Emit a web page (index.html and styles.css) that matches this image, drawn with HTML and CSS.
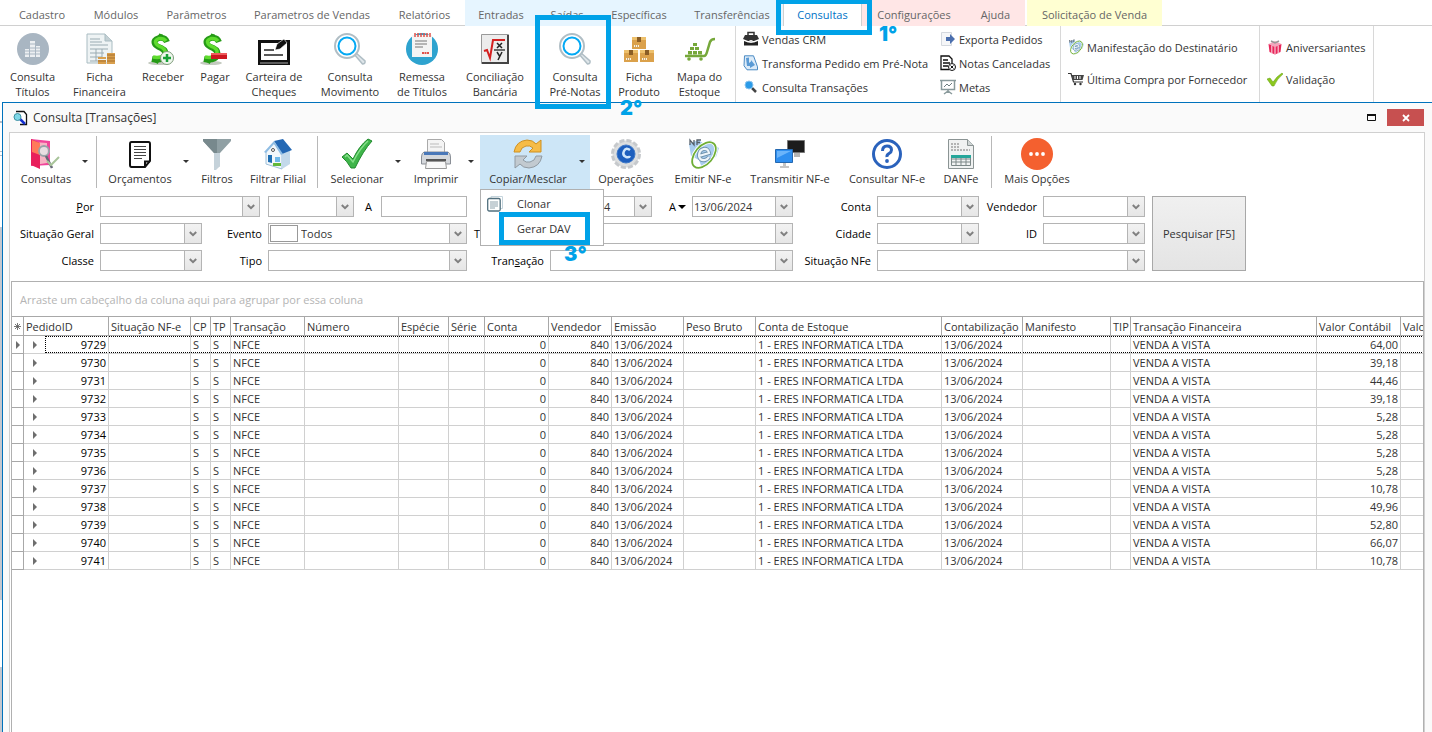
FILE: index.html
```html
<!DOCTYPE html>
<html lang="pt-BR">
<head>
<meta charset="utf-8">
<title>Consulta [Transações]</title>
<link rel="stylesheet" href="styles.css">
</head>
<body>
<svg class="defs" aria-hidden="true">
  <symbol id="chev" viewBox="0 0 8 6"><path d="M.8 1L4 4.200 7.200 1" fill="none" stroke="#808080" stroke-width="2"/></symbol>
  <symbol id="caret" viewBox="0 0 6 3"><path d="M0 0h6L3 3z" fill="#333"/></symbol>
  <symbol id="exp" viewBox="0 0 4 8"><path d="M0 0l4 4-4 4z" fill="#6e6e6e"/></symbol>
  <symbol id="lens" viewBox="0 0 32 32"><path d="M20 21l1.500-1.500L31 28q.5 3-2.500 3z" fill="#dfe6ea" stroke="#b0bec5" stroke-width="1.500"/><circle cx="13" cy="13" r="12" fill="#fff" stroke="#b0bec5" stroke-width="2"/><circle cx="13" cy="13" r="8.500" fill="#fff" stroke="#03a9f4" stroke-width="2"/></symbol>
  <symbol id="nfe" viewBox="0 0 32 32"><path d="M2 6l9-4 5 3 8-3 3 5 5 3-3 9-6 2-3 8-5 1-3-8-8-4z" fill="#a9cdf0"/><path d="M3 7V2l4 5V2M10 7V2h4M10 4.500h3" fill="none" stroke="#55606a" stroke-width="1.300"/><ellipse cx="17" cy="17" rx="15" ry="9" transform="rotate(-50 17 17)" fill="none" stroke="#fff" stroke-width="3.500"/><ellipse cx="17" cy="17" rx="15" ry="9" transform="rotate(-50 17 17)" fill="none" stroke="#6fae36" stroke-width="1.800"/><path d="M12 18l10-3q-1-5-5.500-4T12 18q1 5 6 4 3-1 4-3" fill="none" stroke="#6f93ad" stroke-width="4"/><path d="M12 18l10-3q-1-5-5.500-4T12 18q1 5 6 4 3-1 4-3" fill="none" stroke="#eef5fa" stroke-width="2.200"/></symbol>
  <symbol id="dollar" viewBox="0 0 32 32"><ellipse cx="12" cy="30" rx="11" ry="2" fill="#c3cabf"/><path d="M20 9q-2-5-8-4-6 2-4 6 1 2 6 4 6 3 4 8-3 5-13 3" fill="none" stroke="#259a16" stroke-width="6"/><path d="M14 1l-1 4M11 26l-2 4" fill="none" stroke="#259a16" stroke-width="4"/><path d="M19 8q-2-3-7-2.500-5 2-3 5 1 2 6 4 5 3 2 7-3 4-11 2.500" fill="none" stroke="#5fdc2e" stroke-width="3.500"/></symbol>
  <symbol id="box" viewBox="0 0 14 12"><path d="M0 0h14v12H0z" fill="#dba14b"/><path d="M0 0h14v3H0z" fill="#edc06c"/><path d="M5 0h4v5H5z" fill="#8a5d25"/><path d="M2 8h5v2H2z" fill="#fff3d8"/><path d="M3 9h1M5 9h1" stroke="#8a5d25"/></symbol>
</svg>

<nav class="tabs">
  <button>Cadastro</button><button>Módulos</button><button>Parâmetros</button><button>Parametros de Vendas</button><button>Relatórios</button><button class="blue">Entradas</button><button class="blue">Saídas</button><button class="blue">Específicas</button><button class="blue">Transferências</button><button class="active">Consultas</button><button class="pink">Configurações</button><button class="pink">Ajuda</button><button class="yellow">Solicitação de Venda</button>
</nav>

<section class="ribbon">
  <div class="big">
    <button><svg viewBox="0 0 32 32"><circle cx="16" cy="16" r="16" fill="#a9b6c2"/><path d="M8 16h4v8H8zM13 8h5v16h-5zM19 13h4v11h-4z" fill="#eceff2"/><path d="M7 11h17M7 15h17M7 18h17M7 21h17" stroke="#a9b6c2"/></svg><span>Consulta<br>Títulos</span></button>
    <button><svg viewBox="0 0 32 32"><path d="M3 1h18l7 7v22H3z" fill="#eef3f4" stroke="#a9bcc2"/><path d="M21 1v7h7" fill="#c3d0d4" stroke="#a9bcc2"/><path d="M6 6h10M6 9h12M6 12h18M6 16h18M6 20h14M6 24h12M6 28h10M12 16v12M18 16v8" stroke="#9aabb2"/><path d="M14 27h8v4h-8zM14 24h8v2h-8zM23 20h8v11h-8z" fill="#d9a04e"/><path d="M14 28h8M23 22h8M23 25h8M23 28h8" stroke="#a8702c"/></svg><span>Ficha<br>Financeira</span></button>
    <button><svg viewBox="0 0 32 32"><use href="#dollar"/><circle cx="20" cy="25" r="6.500" fill="#eef7ec" stroke="#7d9a7a"/><path d="M20 21v8M16 25h8" stroke="#18a038" stroke-width="2.500"/></svg><span>Receber</span></button>
    <button><svg viewBox="0 0 32 32"><use href="#dollar"/><path d="M12 20h16v6H12z" fill="#cc1820"/><path d="M12 20h16v2H12z" fill="#ee5a5c"/></svg><span>Pagar</span></button>
    <button><svg viewBox="0 0 32 32"><path d="M1.500 8.500h29v20h-29z" fill="#fff" stroke="#111" stroke-width="3"/><path d="M0 27h32v5H0z" fill="#111"/><path d="M2 30h28" stroke="#aaa"/><path d="M6 17h10M6 22h19" stroke="#222" stroke-width="1.500"/><path d="M17 17l2-6 7-5 3 4-7 6z" fill="#111" stroke="#fff" stroke-width=".6"/></svg><span>Carteira de<br>Cheques</span></button>
    <button><svg viewBox="0 0 32 32"><use href="#lens"/></svg><span>Consulta<br>Movimento</span></button>
    <button><svg viewBox="0 0 32 32"><circle cx="16" cy="16" r="16" fill="#2ea3cf"/><path d="M6 2h20v22H6z" fill="#f4f4f4"/><path d="M9 0v4M12 0v4M15 0v4M18 0v4M21 0v4M24 0v4" stroke="#e0524a" stroke-width="1.500"/><path d="M9 8h12M9 11h12M9 14h8" stroke="#777"/><path d="M16 20h7" stroke="#e0524a" stroke-width="2" stroke-dasharray="2 .5"/></svg><span>Remessa<br>de Títulos</span></button>
    <button><svg viewBox="0 0 32 32"><path d="M2.500 1.500h27v29h-27z" fill="#ececec" stroke="#999"/><path d="M29 2v28H3" fill="none" stroke="#444" stroke-width="2"/><path d="M5 18l3-1 3 8 3-18h12" fill="none" stroke="#d42020" stroke-width="2"/><path d="M15 17h11" stroke="#222" stroke-width="1.300"/><path d="M18 10l5 5M23 10l-5 5M18 19l2.500 4M23 19l-4 8" fill="none" stroke="#222" stroke-width="1.500"/></svg><span>Conciliação<br>Bancária</span></button>
    <button><svg viewBox="0 0 32 32"><use href="#lens"/></svg><span>Consulta<br>Pré-Notas</span></button>
    <button><svg viewBox="0 0 32 32"><use href="#box" x="9" y="4" width="14" height="12"/><use href="#box" x="1" y="17" width="14" height="12"/><use href="#box" x="17" y="17" width="14" height="12"/></svg><span>Ficha<br>Produto</span></button>
    <button><svg viewBox="0 0 32 32"><path d="M1 23h19q2 0 3-4l3-10q1-3 5-3" fill="none" stroke="#76a83a" stroke-width="2.500"/><path d="M4 18h4v3.500H4zM9 18h4v3.500H9zM14 18h4v3.500h-4zM6 14h4v3H6zM11 14h4v3h-4zM9 10h4v3H9z" fill="#76a83a"/><circle cx="5" cy="26" r="1.800" fill="#76a83a"/><circle cx="17" cy="26" r="1.800" fill="#76a83a"/></svg><span>Mapa do<br>Estoque</span></button>
  </div>
  <div class="group three">
    <button><svg viewBox="0 0 16 16"><path d="M5 4V1.500h6V4" fill="none" stroke="#333" stroke-width="1.500"/><path d="M2 4h12l2 4-5 2H5L0 8z" fill="#333"/><path d="M1 10l4 1.500h6L15 10v4.500H1z" fill="#222"/><path d="M6.500 9h3v3h-3z" fill="#ddd"/></svg>Vendas CRM</button>
    <button><svg viewBox="0 0 16 16"><path d="M1.500.8h9l4 11v3H4l-3-4z" fill="#dcebf8" stroke="#4a8ac4"/><path d="M3 3l3-.5V8l2-1.500V5l4 5-5 3v-2H4z" fill="#5b9bd5"/></svg>Transforma Pedido em Pré-Nota</button>
    <button><svg viewBox="0 0 16 16"><path d="M9 9l4 4" stroke="#444" stroke-width="2.500"/><circle cx="6" cy="6" r="4" fill="#2b9be8" stroke="#8cc4ee"/></svg>Consulta Transações</button>
  </div>
  <div class="group three">
    <button><svg viewBox="0 0 16 16"><path d="M1.500 1.500h10v13h-10z" fill="#f5f6f8" stroke="#d4d8de"/><path d="M6 6h4V3l5 5-5 5v-3H6z" fill="#4b6fae"/></svg>Exporta Pedidos</button>
    <button><svg viewBox="0 0 16 16"><path d="M9.500 14.500H1V1h8l3 3v4" fill="#fff" stroke="#111" stroke-width="1.300"/><path d="M3 5h5M3 8h7M3 11h5" stroke="#111" stroke-width="1.300"/><circle cx="12" cy="12" r="3.500" fill="#fff" stroke="#111"/><path d="M10.500 10.500l3 3M13.500 10.500l-3 3" stroke="#111"/></svg>Notas Canceladas</button>
    <button><svg viewBox="0 0 16 16"><path d="M0 1.500h16M1.500 2v8.500h13V2M8 11v3M8 12l-4 3M8 12l4 3" fill="none" stroke="#8a9a9c" stroke-width="1.500"/><path d="M4 8l3-3 2 2 3-3" fill="none" stroke="#6d7d80"/></svg>Metas</button>
  </div>
  <div class="group two wide">
    <button><svg viewBox="0 0 32 32"><use href="#nfe"/></svg>Manifestação do Destinatário</button>
    <button><svg viewBox="0 0 16 16"><path d="M0 2.500h3l2.500 8.500H15" fill="none" stroke="#333" stroke-width="1.200"/><path d="M3.500 4H16l-1.500 5h-9.500z" fill="#444"/><path d="M7 5v3M9.500 5v3M12 5v3" stroke="#fff"/><circle cx="7" cy="13" r="1.200" fill="#333"/><circle cx="12.500" cy="13" r="1.200" fill="#333"/></svg>Última Compra por Fornecedor</button>
  </div>
  <div class="group two last">
    <button><svg viewBox="0 0 16 16"><path d="M1.500 5l6.500-3 6.500 3L8 8z" fill="#f3a6bd"/><path d="M1.500 5L8 8l6.500-3-1 8L8 15.500 2.500 13z" fill="#e8265a"/><path d="M4.800 6.500v8M11.200 6.500v8M8 8v7.500" stroke="#f9c6d4" stroke-width="1.200"/><path d="M4 2l4 2 4-2" fill="none" stroke="#999" stroke-width="1.500"/></svg>Aniversariantes</button>
    <button><svg viewBox="0 0 16 16"><path d="M0 8l3-1 3 4q4-6 9-9l1 1q-6 5-9 12H5z" fill="#8cc81e" stroke="#5f9a10" stroke-width=".5"/></svg>Validação</button>
  </div>
</section>

<main class="desk">
<section class="window">
  <header class="title">
    <svg viewBox="0 0 16 16" class="i16"><path d="M3 1.500h8l2.500 3v10H7" fill="#fff" stroke="#111" stroke-width="1.300"/><path d="M7 9l5 5" stroke="#1530d0" stroke-width="2.500"/><circle cx="4.500" cy="7" r="3.500" fill="#7fd8e8" stroke="#3a8fa0"/></svg>
    <h1>Consulta [Transações]</h1>
    <button class="max" aria-label="Maximizar"><svg viewBox="0 0 9 7"><path d="M.5 1.500h8v5h-8z" fill="none" stroke="#111"/><path d="M0 1h9" stroke="#111" stroke-width="2"/></svg></button>
    <button class="close" aria-label="Fechar"><svg viewBox="0 0 8 8"><path d="M1 1l6 6M7 1L1 7" stroke="#fff" stroke-width="1.800"/></svg></button>
  </header>

  <div class="panel">
    <div class="tools">
      <button><svg viewBox="0 0 32 32"><path d="M1 1l19 2v24L1 28z" fill="#f0459a"/><path d="M4 4l13 1v20L4 27z" fill="#f7b4c4"/><path d="M1 1l9 4v26l-9-4z" fill="#e8205c"/><path d="M2 2l8 3v12L2 14z" fill="#ff7a5a"/><circle cx="14" cy="13" r="5" fill="#e4e8ea" fill-opacity=".8" stroke="#98a3a8" stroke-width="1.800"/><path d="M16 18l6 12" stroke="#667" stroke-width="2.500"/><path d="M17 23l4 4 8-8" fill="none" stroke="#a8c49a" stroke-width="2"/></svg>Consultas</button>
      <button class="more" aria-label="Mais consultas"><svg><use href="#caret"/></svg></button>
      <i class="sep"></i>
      <button><svg viewBox="0 0 32 32"><path d="M7.500 4h17q1.500 0 1.500 2v17l-5 6H7.500Q6 29 6 27V6q0-2 1.500-2z" fill="#fff" stroke="#111" stroke-width="2"/><path d="M26 23.500h-5V29" fill="none" stroke="#111" stroke-width="2"/><path d="M10 8.500h12M10 11.500h12M10 14.500h12M10 17.500h12M10 20.500h8" stroke="#444"/></svg>Orçamentos</button>
      <button class="more" aria-label="Mais orçamentos"><svg><use href="#caret"/></svg></button>
      <button><svg viewBox="0 0 32 32"><path d="M2 1h28v2L19 15v13l-6 4V15L2 3z" fill="#90a0a4"/><path d="M2 1h14v14h-3L2 3z" fill="#78898d"/><path d="M13 15h6v13l-4 4h-2z" fill="#c5d2da"/></svg>Filtros</button>
      <button><svg viewBox="0 0 32 32"><path d="M4 13l8-8 8 10v16L4 26z" fill="#f2f7fb" stroke="#9fc0da"/><path d="M20 15l8-3v14l-8 5z" fill="#c3d9ea"/><path d="M12 3l9-2 9 11-10 4z" fill="#2468b4"/><path d="M12 3L2 14l2 1 8-9 7 11 2-1z" fill="#8fbde4"/><path d="M6 17h4v8l-4-1z" fill="#1f6fb4"/><path d="M13 19h5v5h-5z" fill="#6fb8e8"/><circle cx="11" cy="12" r="1.500" fill="#fff" stroke="#555"/><path d="M11 25h8v3h-8z" fill="#62b83a"/></svg>Filtrar Filial</button>
      <i class="sep"></i>
      <button><svg viewBox="0 0 32 32"><path d="M1 19l5-4 6 6Q18 8 27 1l4 2Q22 13 14 30h-4Q6 23 1 19z" fill="#3fb54a" stroke="#1f8a2c"/><path d="M4 19l2-2 6 7Q19 10 27 3" fill="none" stroke="#86e08a" stroke-width="1.500"/></svg>Selecionar</button>
      <button class="more" aria-label="Mais seleções"><svg><use href="#caret"/></svg></button>
      <button><svg viewBox="0 0 32 32"><path d="M7.500 1.500h14l3 3V15h-17z" fill="#f4f4f4" stroke="#aaa"/><path d="M10 6h9M10 9h12" stroke="#bbb"/><path d="M4 14h24q2.500 1 2.500 5v7h-29v-7q0-4 2.500-5z" fill="#d5d8dc" stroke="#8a8f96"/><path d="M4 14h24v3H4z" fill="#4a78b8"/><path d="M6.500 23.500h19l1 7h-21z" fill="#f8f8f8" stroke="#999"/><path d="M6 22h20" stroke="#555" stroke-width="2"/></svg>Imprimir</button>
      <button class="more" aria-label="Mais impressões"><svg><use href="#caret"/></svg></button>
      <div class="open">
        <button><svg viewBox="0 0 32 32"><path d="M2 14Q4 3 15 2q6 0 9 4l5-4v12H17l4-4q-3-3-7-2-5 1-6 6z" fill="#f6bc48" stroke="#cf9020"/><path d="M30 18q-2 11-13 12-6 0-9-4l-5 4V18h12l-4 4q3 3 7 2 5-1 6-6z" fill="#c2cad0" stroke="#909aa2"/></svg>Copiar/Mesclar</button>
        <button class="more" aria-label="Mais cópias"><svg><use href="#caret"/></svg></button>
        <div class="menu">
          <button><svg viewBox="0 0 16 16" class="i16"><path d="M4 3V.5h11.500v12H13" fill="none" stroke="#c4d4dc"/><rect x=".7" y="2.500" width="12.500" height="12.500" rx="1.500" fill="#fff" stroke="#52707e" stroke-width="1.300"/><path d="M3 6h8M3 8h8M3 10h8M3 12h5" stroke="#8ea2ac"/></svg><span>Clonar</span></button>
          <button><span>Gerar DAV</span></button>
        </div>
      </div>
      <button><svg viewBox="0 0 32 32"><circle cx="16" cy="16" r="13.500" fill="#dcdedf" stroke="#c6c9cc" stroke-width="3" stroke-dasharray="5 2.070"/><circle cx="16" cy="16" r="9" fill="#1d5fbe" stroke="#3f79c8"/><path d="M20 12q-4-3-6 1t2 6q3 1 4-1" fill="none" stroke="#cfe6fb" stroke-width="2.500"/></svg>Operações</button>
      <button><svg viewBox="0 0 32 32"><use href="#nfe"/></svg>Emitir NF-e</button>
      <button><svg viewBox="0 0 32 32"><path d="M13.500 2.500h17v12h-17z" fill="#1c1c1c" stroke="#777"/><path d="M20 15h6v4h-6z" fill="#b5b5b5"/><path d="M1.500 11.500h17v13h-17z" fill="#2f8ff0" stroke="#2468b0"/><path d="M3 13h14L3 20z" fill="#6bb4fa"/><path d="M9 25h3v3h3v2H6v-2h3z" fill="#c5c5c5"/></svg>Transmitir NF-e</button>
      <button><svg viewBox="0 0 32 32"><circle cx="16" cy="16" r="13.500" fill="#fff" stroke="#2a62bc" stroke-width="3"/><path d="M11.500 13q0-5 4.500-5t4.500 4q0 2-2.500 3.500T16 19" fill="none" stroke="#2a62bc" stroke-width="3"/><circle cx="16" cy="23" r="1.900" fill="#2a62bc"/></svg>Consultar NF-e</button>
      <button><svg viewBox="0 0 32 32"><path d="M3.500 1.500h19l6 6v23h-25z" fill="#f0f2f2" stroke="#8b9494"/><path d="M22.500 1.500v6h6" fill="#d0d6d6" stroke="#8b9494"/><path d="M6 6h9M6 9h9M6 12h19" stroke="#777" stroke-dasharray="2 1"/><path d="M6.500 17.500h19v10h-19zM6 21h20M6 24h20M11 17v10M16 17v10M21 17v10" fill="none" stroke="#7c8888"/><path d="M6 17h20v3H6z" fill="#26a69a"/></svg>DANFe</button>
      <i class="sep"></i>
      <button><svg viewBox="0 0 32 32"><circle cx="16" cy="16" r="16" fill="#f4602f"/><circle cx="10" cy="16" r="1.900" fill="#fff"/><circle cx="16" cy="16" r="1.900" fill="#fff"/><circle cx="22" cy="16" r="1.900" fill="#fff"/></svg>Mais Opções</button>
    </div>

    <form class="filters">
      <label for="por"><u>P</u>or</label>
      <div class="combo c2"><select id="por"><option></option></select><span><svg><use href="#chev"/></svg></span></div>
      <div class="combo d1"><select aria-label="Operador"><option></option></select><span><svg><use href="#chev"/></svg></span></div>
      <label for="ate" class="mid">A</label>
      <input id="ate" type="text">
      <div class="combo date1"><select aria-label="Data inicial"><option>13/06/2024</option></select><span><svg><use href="#chev"/></svg></span></div>
      <label for="fim" class="until">A<svg><path d="M0 0h8L4 4z"/></svg></label>
      <div class="combo date2"><select id="fim"><option>13/06/2024</option></select><span><svg><use href="#chev"/></svg></span></div>
      <label for="conta" class="l4">Conta</label>
      <div class="combo f4"><select id="conta"><option></option></select><span><svg><use href="#chev"/></svg></span></div>
      <label for="vend" class="l5">Vendedor</label>
      <div class="combo f5"><select id="vend"><option></option></select><span><svg><use href="#chev"/></svg></span></div>
      <button type="button" class="search">Pesquisar [F5]</button>

      <label for="sit" class="r2">Situação Geral</label>
      <div class="combo f1 r2"><select id="sit"><option></option></select><span><svg><use href="#chev"/></svg></span></div>
      <label for="evento" class="l2 r2">Evento</label>
      <div class="combo f2 r2 swatch"><i></i><select id="evento"><option>Todos</option></select><span><svg><use href="#chev"/></svg></span></div>
      <label for="t" class="l3 r2 start">T</label>
      <div class="combo f3 r2"><select id="t"><option></option></select><span><svg><use href="#chev"/></svg></span></div>
      <label for="cidade" class="l4 r2">Cidade</label>
      <div class="combo f4 r2"><select id="cidade"><option></option></select><span><svg><use href="#chev"/></svg></span></div>
      <label for="ident" class="l5 r2">ID</label>
      <div class="combo f5 r2"><select id="ident"><option></option></select><span><svg><use href="#chev"/></svg></span></div>

      <label for="classe" class="r3">Classe</label>
      <div class="combo f1 r3"><select id="classe"><option></option></select><span><svg><use href="#chev"/></svg></span></div>
      <label for="tipo" class="l2 r3">Tipo</label>
      <div class="combo f2 r3"><select id="tipo"><option></option></select><span><svg><use href="#chev"/></svg></span></div>
      <label for="trans" class="l3 r3">Tran<u>s</u>ação</label>
      <div class="combo f3 r3"><select id="trans"><option></option></select><span><svg><use href="#chev"/></svg></span></div>
      <label for="nfes" class="l4 r3">Situação NFe</label>
      <div class="combo f45 r3"><select id="nfes"><option></option></select><span><svg><use href="#chev"/></svg></span></div>
    </form>

    <div class="grid">
      <p class="drop">Arraste um cabeçalho da coluna aqui para agrupar por essa coluna</p>
      <table>
        <colgroup><col class="w12"><col class="w85"><col class="w82"><col class="w20"><col class="w20"><col class="w74"><col class="w94"><col class="w50"><col class="w36"><col class="w64"><col class="w63"><col class="w72"><col class="w72"><col class="w186"><col class="w81"><col class="w88"><col class="w20"><col class="w186"><col class="w84"><col class="w50"></colgroup>
        <thead><tr><th><svg viewBox="0 0 7 7"><path d="M3.500 0v7M0 3.500h7M1 1l5 5M6 1L1 6" stroke="#555" stroke-width=".8"/></svg></th><th>PedidoID</th><th>Situação NF-e</th><th>CP</th><th>TP</th><th>Transação</th><th>Número</th><th>Espécie</th><th>Série</th><th>Conta</th><th>Vendedor</th><th>Emissão</th><th>Peso Bruto</th><th>Conta de Estoque</th><th>Contabilização</th><th>Manifesto</th><th>TIP</th><th>Transação Financeira</th><th>Valor Contábil</th><th>Valor</th></tr></thead>
        <tbody>
          <tr class="focus"><td><svg><use href="#exp"/></svg></td><td><div><svg><use href="#exp"/></svg><span>9729</span></div></td><td></td><td>S</td><td>S</td><td>NFCE</td><td></td><td></td><td></td><td>0</td><td>840</td><td>13/06/2024</td><td></td><td>1 - ERES INFORMATICA LTDA</td><td>13/06/2024</td><td></td><td></td><td>VENDA A VISTA</td><td>64,00</td><td></td></tr>
          <tr><td></td><td><div><svg><use href="#exp"/></svg><span>9730</span></div></td><td></td><td>S</td><td>S</td><td>NFCE</td><td></td><td></td><td></td><td>0</td><td>840</td><td>13/06/2024</td><td></td><td>1 - ERES INFORMATICA LTDA</td><td>13/06/2024</td><td></td><td></td><td>VENDA A VISTA</td><td>39,18</td><td></td></tr>
          <tr><td></td><td><div><svg><use href="#exp"/></svg><span>9731</span></div></td><td></td><td>S</td><td>S</td><td>NFCE</td><td></td><td></td><td></td><td>0</td><td>840</td><td>13/06/2024</td><td></td><td>1 - ERES INFORMATICA LTDA</td><td>13/06/2024</td><td></td><td></td><td>VENDA A VISTA</td><td>44,46</td><td></td></tr>
          <tr><td></td><td><div><svg><use href="#exp"/></svg><span>9732</span></div></td><td></td><td>S</td><td>S</td><td>NFCE</td><td></td><td></td><td></td><td>0</td><td>840</td><td>13/06/2024</td><td></td><td>1 - ERES INFORMATICA LTDA</td><td>13/06/2024</td><td></td><td></td><td>VENDA A VISTA</td><td>39,18</td><td></td></tr>
          <tr><td></td><td><div><svg><use href="#exp"/></svg><span>9733</span></div></td><td></td><td>S</td><td>S</td><td>NFCE</td><td></td><td></td><td></td><td>0</td><td>840</td><td>13/06/2024</td><td></td><td>1 - ERES INFORMATICA LTDA</td><td>13/06/2024</td><td></td><td></td><td>VENDA A VISTA</td><td>5,28</td><td></td></tr>
          <tr><td></td><td><div><svg><use href="#exp"/></svg><span>9734</span></div></td><td></td><td>S</td><td>S</td><td>NFCE</td><td></td><td></td><td></td><td>0</td><td>840</td><td>13/06/2024</td><td></td><td>1 - ERES INFORMATICA LTDA</td><td>13/06/2024</td><td></td><td></td><td>VENDA A VISTA</td><td>5,28</td><td></td></tr>
          <tr><td></td><td><div><svg><use href="#exp"/></svg><span>9735</span></div></td><td></td><td>S</td><td>S</td><td>NFCE</td><td></td><td></td><td></td><td>0</td><td>840</td><td>13/06/2024</td><td></td><td>1 - ERES INFORMATICA LTDA</td><td>13/06/2024</td><td></td><td></td><td>VENDA A VISTA</td><td>5,28</td><td></td></tr>
          <tr><td></td><td><div><svg><use href="#exp"/></svg><span>9736</span></div></td><td></td><td>S</td><td>S</td><td>NFCE</td><td></td><td></td><td></td><td>0</td><td>840</td><td>13/06/2024</td><td></td><td>1 - ERES INFORMATICA LTDA</td><td>13/06/2024</td><td></td><td></td><td>VENDA A VISTA</td><td>5,28</td><td></td></tr>
          <tr><td></td><td><div><svg><use href="#exp"/></svg><span>9737</span></div></td><td></td><td>S</td><td>S</td><td>NFCE</td><td></td><td></td><td></td><td>0</td><td>840</td><td>13/06/2024</td><td></td><td>1 - ERES INFORMATICA LTDA</td><td>13/06/2024</td><td></td><td></td><td>VENDA A VISTA</td><td>10,78</td><td></td></tr>
          <tr><td></td><td><div><svg><use href="#exp"/></svg><span>9738</span></div></td><td></td><td>S</td><td>S</td><td>NFCE</td><td></td><td></td><td></td><td>0</td><td>840</td><td>13/06/2024</td><td></td><td>1 - ERES INFORMATICA LTDA</td><td>13/06/2024</td><td></td><td></td><td>VENDA A VISTA</td><td>49,96</td><td></td></tr>
          <tr><td></td><td><div><svg><use href="#exp"/></svg><span>9739</span></div></td><td></td><td>S</td><td>S</td><td>NFCE</td><td></td><td></td><td></td><td>0</td><td>840</td><td>13/06/2024</td><td></td><td>1 - ERES INFORMATICA LTDA</td><td>13/06/2024</td><td></td><td></td><td>VENDA A VISTA</td><td>52,80</td><td></td></tr>
          <tr><td></td><td><div><svg><use href="#exp"/></svg><span>9740</span></div></td><td></td><td>S</td><td>S</td><td>NFCE</td><td></td><td></td><td></td><td>0</td><td>840</td><td>13/06/2024</td><td></td><td>1 - ERES INFORMATICA LTDA</td><td>13/06/2024</td><td></td><td></td><td>VENDA A VISTA</td><td>66,07</td><td></td></tr>
          <tr><td></td><td><div><svg><use href="#exp"/></svg><span>9741</span></div></td><td></td><td>S</td><td>S</td><td>NFCE</td><td></td><td></td><td></td><td>0</td><td>840</td><td>13/06/2024</td><td></td><td>1 - ERES INFORMATICA LTDA</td><td>13/06/2024</td><td></td><td></td><td>VENDA A VISTA</td><td>10,78</td><td></td></tr>
        </tbody>
      </table>
    </div>
  </div>
</section>
</main>

<div class="mark m1"></div><b class="step s1">1°</b>
<div class="mark m2"></div><b class="step s2">2°</b>
<div class="mark m3"></div><b class="step s3">3°</b>
</body>
</html>
```
FILE: styles.css
```css
* { box-sizing: border-box; }
body {
  margin: 0;
  height: 100vh;
  display: flex;
  flex-direction: column;
  overflow: hidden;
  position: relative;
  background: #fff;
  color: #333;
  font: 11px/15px "Open Sans", "Noto Sans", sans-serif;
}
button {
  margin: 0;
  padding: 0;
  border: 0;
  background: none;
  color: inherit;
  font: inherit;
  white-space: nowrap;
}
svg { display: block; flex: none; }
.defs { position: absolute; width: 0; height: 0; }
.i16 { width: 16px; height: 16px; }

/* Ribbon tabs */
.tabs {
  display: grid;
  grid-template-columns: 74px 74px 87px 144px 81px 72px 60px 84px 102px 79px 104px 59px 137px;
  height: 26px;
  padding-left: 5px;
  border-bottom: 1px solid #d0d0d0;
  color: #666;
}
.tabs button { padding-top: 3px; }
.tabs .blue { background: #e6f5ff; }
.tabs .pink { background: #ffe6e6; }
.tabs .yellow { background: #ffffd2; margin-left: 2px; }
.tabs .active {
  height: 26px;
  background: #fff;
  border: solid #d0d0d0;
  border-width: 0 1px;
  color: #0072c6;
}

/* Ribbon commands */
.ribbon { display: flex; height: 76px; }
.big {
  display: grid;
  grid-template-columns: 65px 69px 58px 46px 72px 80px 64px 82px 78px 50px 71px;
}
.big button {
  display: flex;
  flex-direction: column;
  align-items: center;
  gap: 4px;
  padding-top: 7px;
}
.big svg { width: 32px; height: 32px; }
.group {
  display: flex;
  flex-direction: column;
}
.group button {
  display: flex;
  align-items: center;
  gap: 3px;
  height: 24px;
}
.group svg { width: 16px; height: 16px; }
.three { width: 197px; padding: 1px 0 0 7px; }
.big + .three, .wide, .last { border-left: 1px solid #d8d8d8; }
.three + .three { width: 128px; padding-left: 8px; }
.two { padding: 9px 0 0 7px; gap: 8px; }
.wide { width: 199px; }
.last { width: 115px; border-right: 1px solid #d8d8d8; }

/* Inner window */
.desk {
  flex: 1;
  display: flex;
  min-height: 0;
  padding-left: 2px;
  background: linear-gradient(#fff 19px, #b8bcc4 19px 21px, #fff 21px 49px, #b8bcc4 49px 50px, #fff 50px 53px, #b8bcc4 53px 54px, #fff 54px 125px, #c4c8d0 125px 498px, #fff 498px 565px, #c4c8d0 565px);
}
.window {
  flex: 1;
  min-width: 0;
  display: flex;
  flex-direction: column;
  padding: 0 7px 0 6px;
  border: solid #0072bc;
  border-width: 1px 0 0 1px;
  background: #fafafa;
}
.title {
  display: flex;
  align-items: center;
  height: 29px;
  padding-left: 4px;
}
.title h1 {
  flex: 1;
  margin: 0 0 0 4px;
  font-size: 12px;
  font-weight: 400;
}
.max { width: 30px; height: 17px; }
.max svg { width: 9px; height: 7px; margin: 0 auto 0 10px; }
.close {
  width: 37px;
  height: 17px;
  margin-right: 1px;
  background: #c75050;
}
.close svg { width: 8px; height: 8px; margin: 0 auto; }
.panel {
  flex: 1;
  min-height: 0;
  display: flex;
  flex-direction: column;
  border: solid #d0d0d0;
  border-width: 1px 1px 0;
  background: #fff;
}

/* Toolbar */
.tools {
  display: grid;
  grid-template-columns: 72px 14px 1px 86px 12px 44px 78px 2px 76px 9px 64px 12px 110px 72px 82px 92px 102px 53px 1px 90px;
  height: 56px;
  padding-top: 2px;
}
.tools > button, .open > button {
  display: flex;
  flex-direction: column;
  align-items: center;
  gap: 1px;
  padding-top: 3px;
}
.tools > button:nth-of-type(15) { padding-right: 7px; }
.tools > button > svg, .open > button > svg { width: 32px; height: 32px; }
.tools .more {
  align-items: flex-start;
  padding-top: 25px;
}
.tools .more svg { width: 6px; height: 3px; }
.sep {
  width: 1px;
  height: 52px;
  margin-top: 1px;
  background: #b8b8b8;
}
.open {
  display: grid;
  grid-template-columns: 96px 14px;
  position: relative;
  background: #cde6f7;
}
.open .more { padding-left: 3px; }
.menu {
  position: absolute;
  z-index: 2;
  top: 54px;
  left: 0;
  width: 124px;
  padding: 1px 0 4px;
  border: 1px solid #b0b0b0;
  background: #fff;
}
.menu button {
  display: flex;
  align-items: center;
  width: 100%;
  height: 25px;
  padding-left: 6px;
}
.menu span { margin-left: 14px; }
.menu button:last-child span { margin-left: 30px; }

/* Filter form */
.filters {
  display: grid;
  grid-template-columns: 90px 102px 58px 8px 86px 27px 86px 83px 102px 40px 101px 84px 102px 64px 102px 7px 94px;
  grid-template-rows: repeat(3, 21px);
  row-gap: 6px;
  padding: 7px 0 10px;
  color: #000;
}
.filters label {
  grid-area: 1 / 1;
  justify-self: end;
  align-self: center;
  padding-right: 6px;
  white-space: nowrap;
}
.filters .mid { grid-area: 1 / 6; padding-right: 9px; }
.filters .until {
  grid-area: 1 / 10;
  display: flex;
  align-items: center;
  gap: 2px;
}
.until svg { width: 8px; height: 4px; }
.filters .l2 { grid-column: 2 / 5; }
.filters .l3 { grid-column: 8; }
.filters .l4 { grid-column: 12; }
.filters .l5 { grid-column: 14; }
.filters .start { justify-self: start; padding-left: 7px; }
.combo, .filters input {
  min-width: 0;
  border: 1px solid #b4b4b4;
  background: #fff;
}
.filters input { grid-area: 1 / 7; }
.combo {
  grid-row: 1;
  display: grid;
  grid-template-columns: 1fr 17px;
}
.combo select {
  grid-area: 1 / 1 / 2 / 3;
  appearance: none;
  min-width: 0;
  padding: 0 18px 0 1px;
  border: 0;
  background: none;
  color: #333;
  font: inherit;
}
.combo span {
  grid-area: 1 / 2;
  display: grid;
  place-items: center;
  border-left: 1px solid #b4b4b4;
  background: linear-gradient(#f2f2f2, #e6e6e6);
  pointer-events: none;
}
.combo span svg { width: 8px; height: 6px; }
.c2 { grid-column: 2 / 4; }
.d1 { grid-column: 5; }
.date1 { grid-column: 9; }
.date2 { grid-column: 11; }
.f1 { grid-column: 2; }
.f2 { grid-column: 5 / 8; }
.f3 { grid-column: 9 / 12; }
.f4 { grid-column: 13; }
.f5 { grid-column: 15; }
.f45 { grid-column: 13 / 16; }
.filters .r2 { grid-row: 2; }
.filters .r3 { grid-row: 3; }
.swatch i {
  grid-area: 1 / 1;
  width: 28px;
  height: 17px;
  margin: 1px;
  border: 1px solid #999;
}
.swatch select { padding-left: 32px; }
.search {
  grid-area: 1 / 17 / 4 / 18;
  border: 1px solid #a8a8a8;
  background: linear-gradient(#f0f0f0, #e4e4e4);
  color: #333;
}

/* Data grid */
.grid {
  flex: 1;
  min-height: 0;
  margin-left: 1px;
  overflow: hidden;
  border: solid #b0b0b0;
  border-width: 1px 1px 0;
}
.drop {
  height: 35px;
  margin: 0;
  padding: 10px 8px 0;
  border-bottom: 1px solid #a8a8a8;
  color: #b4b4b4;
}
table {
  width: 1429px;
  table-layout: fixed;
  border-collapse: separate;
  border-spacing: 0;
}
.w12 { width: 12px; } .w20 { width: 20px; } .w36 { width: 36px; } .w50 { width: 50px; }
.w63 { width: 63px; } .w64 { width: 64px; } .w72 { width: 72px; } .w74 { width: 74px; }
.w81 { width: 81px; } .w82 { width: 82px; } .w84 { width: 84px; } .w85 { width: 85px; }
.w88 { width: 88px; } .w94 { width: 94px; } .w186 { width: 186px; }
th, td {
  height: 18px;
  padding: 0 2px;
  border: solid #d0d0d0;
  border-width: 0 1px 1px 0;
  overflow: hidden;
  font-weight: 400;
  text-align: left;
  white-space: nowrap;
}
th { height: 19px; border-color: #a8a8a8; }
th:first-child svg { width: 7px; height: 7px; }
td:first-child { border-color: #a8a8a8; }
td:first-child svg { width: 4px; height: 8px; margin-left: 2px; }
td:nth-child(10), td:nth-child(11), td:nth-child(19) { text-align: right; }
td:nth-child(2) { padding: 0; color: #000; }
td div { display: flex; align-items: center; padding-left: 9px; }
td div svg { width: 4px; height: 8px; margin-right: 8px; }
td div span { flex: 1; padding-right: 2px; line-height: 17px; text-align: right; }
.focus td:nth-child(n+3), .focus span {
  background:
    repeating-linear-gradient(90deg, #000 0 1px, transparent 1px 2px) top / 100% 1px no-repeat,
    repeating-linear-gradient(90deg, #000 0 1px, transparent 1px 2px) bottom / 100% 1px no-repeat;
}
.focus span { border-left: 1px dotted #000; }

/* Step marks laid over the screen */
.mark { position: absolute; z-index: 3; border: 5px solid #00a2e8; pointer-events: none; }
.m1 { left: 776px; top: -1px; width: 96px; height: 36px; }
.m2 { left: 535px; top: 15px; width: 76px; height: 94px; }
.m3 { left: 499px; top: 212px; width: 91px; height: 33px; }
.step {
  position: absolute;
  z-index: 3;
  color: #00a2e8;
  font: 900 20px/20px Inter, "Liberation Sans", sans-serif;
}
.s1 { left: 879px; top: 24px; }
.s2 { left: 620px; top: 98px; }
.s3 { left: 564px; top: 244px; }
```
